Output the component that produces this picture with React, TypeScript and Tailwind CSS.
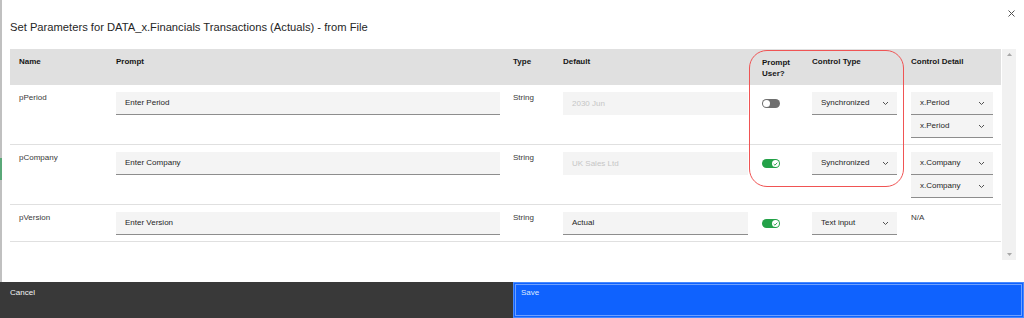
import React from "react";

type Param = {
  name: string;
  prompt: string;
  type: string;
  defaultValue: string;
  defaultDisabled: boolean;
  promptUser: boolean;
  controlType: string;
  details: string[] | null;
};

const params: Param[] = [
  {
    name: "pPeriod",
    prompt: "Enter Period",
    type: "String",
    defaultValue: "2030 Jun",
    defaultDisabled: true,
    promptUser: false,
    controlType: "Synchronized",
    details: ["x.Period", "x.Period"],
  },
  {
    name: "pCompany",
    prompt: "Enter Company",
    type: "String",
    defaultValue: "UK Sales Ltd",
    defaultDisabled: true,
    promptUser: true,
    controlType: "Synchronized",
    details: ["x.Company", "x.Company"],
  },
  {
    name: "pVersion",
    prompt: "Enter Version",
    type: "String",
    defaultValue: "Actual",
    defaultDisabled: false,
    promptUser: true,
    controlType: "Text input",
    details: null,
  },
];

function Chevron() {
  return (
    <svg width="7" height="5" viewBox="0 0 7 5" className="shrink-0">
      <path d="M1 1l2.5 2.5L6 1" fill="none" stroke="#525252" strokeWidth="1" />
    </svg>
  );
}

function Toggle({ on }: { on: boolean }) {
  if (!on) {
    return (
      <div className="w-[18px] h-[9px] rounded-full bg-[#6f6f6f] flex items-center px-[1px]">
        <div className="w-[7px] h-[7px] rounded-full bg-white" />
      </div>
    );
  }
  return (
    <div className="w-[18px] h-[9px] rounded-full bg-[#24a148] flex items-center justify-end px-[1px]">
      <div className="w-[7px] h-[7px] rounded-full bg-white flex items-center justify-center">
        <svg width="5" height="4" viewBox="0 0 5 4">
          <path d="M0.7 2l1.2 1.2L4.3 0.8" fill="none" stroke="#24a148" strokeWidth="1" />
        </svg>
      </div>
    </div>
  );
}

function Select({ value, width }: { value: string; width: string }) {
  return (
    <div
      className={`${width} h-[23px] bg-[#f4f4f4] border-b border-[#8d8d8d] flex items-center justify-between pl-[9px] pr-[8px] text-[#262626]`}
    >
      <span>{value}</span>
      <Chevron />
    </div>
  );
}

export default function App() {
  return (
    <div className="relative w-[1024px] h-[318px] bg-white flex flex-col font-['Liberation_Sans',Arial,sans-serif] overflow-hidden">
      <div className="flex flex-1 min-h-0">
        {/* left edge of the page behind the modal */}
        <div className="w-[2px] flex flex-col bg-[#c0c0c0]">
          <div className="h-[158px]" />
          <div className="h-[22px] bg-[#5aa878]" />
        </div>

        <div className="flex-1 flex flex-col">
          {/* Title */}
          <div className="h-[49px] flex items-start justify-between pl-[8px] pr-[9px]">
            <h1 className="mt-[20px] text-[11.2px] leading-[14px] text-[#262626]">
              Set Parameters for DATA_x.Financials Transactions (Actuals) - from File
            </h1>
            <svg width="7" height="7" viewBox="0 0 7 7" className="mt-[10px]">
              <path d="M0.5 0.5l6 6M6.5 0.5l-6 6" stroke="#525252" strokeWidth="1" />
            </svg>
          </div>

          {/* Table + scrollbar */}
          <div className="flex pl-[8px]">
            <div className="w-[991px] text-[8px] leading-[10px]">
              <div className="grid grid-cols-[97px_397px_50px_199px_50px_99px_1fr] pl-[9px] h-[36px] bg-[#e0e0e0] pt-[8px] font-bold text-[#161616]">
                <div>Name</div>
                <div>Prompt</div>
                <div>Type</div>
                <div>Default</div>
                <div className="leading-[11px] -mt-[0.5px]">
                  Prompt
                  <br />
                  User?
                </div>
                <div>Control Type</div>
                <div>Control Detail</div>
              </div>

              {params.map((p) => (
                <div
                  key={p.name}
                  className="grid grid-cols-[97px_397px_50px_199px_50px_99px_1fr] pl-[9px] pt-[7px] pb-[6px] border-b border-[#e0e0e0] text-[#393939]"
                >
                  <div className="pt-[1px]">{p.name}</div>
                  <div>
                    <div className="w-[384px] h-[23px] bg-[#f4f4f4] border-b border-[#8d8d8d] flex items-center pl-[9px] text-[#262626]">
                      {p.prompt}
                    </div>
                  </div>
                  <div className="pt-[1px]">{p.type}</div>
                  <div>
                    {p.defaultDisabled ? (
                      <div className="w-[185px] h-[23px] bg-[#f4f4f4] flex items-center pl-[9px] text-[#c6c6c6]">
                        {p.defaultValue}
                      </div>
                    ) : (
                      <div className="w-[185px] h-[23px] bg-[#f4f4f4] border-b border-[#8d8d8d] flex items-center pl-[9px] text-[#262626]">
                        {p.defaultValue}
                      </div>
                    )}
                  </div>
                  <div className="h-[23px] flex items-center">
                    <Toggle on={p.promptUser} />
                  </div>
                  <div>
                    <Select value={p.controlType} width="w-[85px]" />
                  </div>
                  <div>
                    {p.details ? (
                      p.details.map((d, i) => <Select key={i} value={d} width="w-[82px]" />)
                    ) : (
                      <div className="pt-[1px]">N/A</div>
                    )}
                  </div>
                </div>
              ))}
            </div>

            {/* scrollbar */}
            <div className="ml-[1px] w-[14px] h-[211px] bg-[#f1f1f1] flex flex-col items-center justify-between py-[4px]">
              <svg width="5" height="3" viewBox="0 0 5 3">
                <path d="M0 3L2.5 0L5 3z" fill="#a8a8a8" />
              </svg>
              <svg width="5" height="3" viewBox="0 0 5 3">
                <path d="M0 0L2.5 3L5 0z" fill="#a8a8a8" />
              </svg>
            </div>
          </div>
        </div>
      </div>

      {/* Footer buttons */}
      <div className="h-[36px] flex text-[8px] leading-[10px]">
        <div className="w-[513px] bg-[#393939] text-[#f4f4f4] pl-[10px] pt-[6px]">Cancel</div>
        <div className="flex-1 bg-[#0f62fe] text-[#dbe7ff] pl-[8px] pt-[6px] shadow-[inset_0_0_0_1px_#4589ff,inset_0_0_0_2px_#0f62fe,inset_0_0_0_3px_#6ea0ff]">
          Save
        </div>
      </div>

      {/* red annotation around prompt/control type */}
      <div className="absolute left-[749px] top-[50px] w-[155px] h-[137px] rounded-[18px] border border-[#f05454] pointer-events-none" />
    </div>
  );
}
